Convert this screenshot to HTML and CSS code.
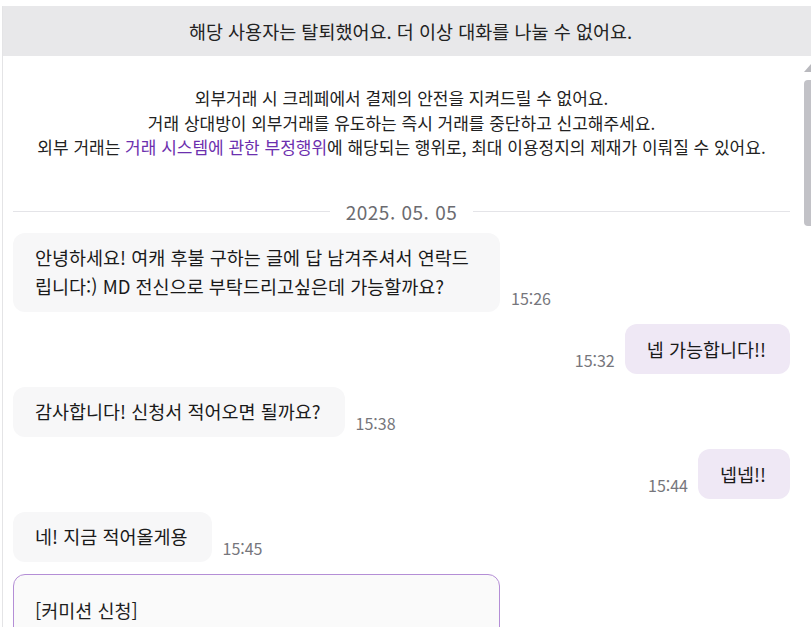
FILE: index.html
```html
<!DOCTYPE html>
<html lang="ko">
<head>
<meta charset="utf-8">
<title>채팅</title>
<link rel="stylesheet" href="styles.css">
</head>
<body>
<div class="page">
  <div class="banner">해당 사용자는 탈퇴했어요. 더 이상 대화를 나눌 수 없어요.</div>
  <div class="body">
    <div class="chat">
      <div class="notice">
        <p>외부거래 시 크레페에서 결제의 안전을 지켜드릴 수 없어요.</p>
        <p>거래 상대방이 외부거래를 유도하는 즉시 거래를 중단하고 신고해주세요.</p>
        <p>외부 거래는 <span class="link">거래 시스템에 관한 부정행위</span>에 해당되는 행위로, 최대 이용정지의 제재가 이뤄질 수 있어요.</p>
      </div>
      <div class="date"><span>2025. 05. 05</span></div>
      <div class="msg left">
        <div class="bubble wide">안녕하세요! 여캐 후불 구하는 글에 답 남겨주셔서 연락드립니다:) MD 전신으로 부탁드리고싶은데 가능할까요?</div>
        <span class="time">15:26</span>
      </div>
      <div class="msg right">
        <span class="time">15:32</span>
        <div class="bubble">넵 가능합니다!!</div>
      </div>
      <div class="msg left">
        <div class="bubble">감사합니다! 신청서 적어오면 될까요?</div>
        <span class="time">15:38</span>
      </div>
      <div class="msg right">
        <span class="time">15:44</span>
        <div class="bubble">넵넵!!</div>
      </div>
      <div class="msg left">
        <div class="bubble">네! 지금 적어올게용</div>
        <span class="time">15:45</span>
      </div>
      <div class="card">
        <p>[커미션 신청]</p>
      </div>
    </div>
    <div class="scrollbar">
      <div class="arrow"></div>
      <div class="thumb"></div>
    </div>
  </div>
</div>
</body>
</html>
```
FILE: styles.css
```css
html, body {
  margin: 0;
  padding: 0;
  background: #ffffff;
  overflow: hidden;
}
body {
  font-family: "Noto Sans CJK KR", "Noto Sans", sans-serif;
  color: #1f1f1f;
  height: 627px;
}
.page {
  margin: 6px 0 0 2px;
  border-left: 1px solid #e4e4e6;
  height: 621px;
  display: flex;
  flex-direction: column;
}
.banner {
  background: #e8e8ea;
  height: 50px;
  display: flex;
  align-items: center;
  justify-content: center;
  font-size: 18.5px;
  color: #222;
  padding-left: 7px;
}
.body {
  flex: 1;
  display: flex;
  overflow: hidden;
}
.chat {
  flex: 1;
  padding: 30px 13px 0 10px;
  display: flex;
  flex-direction: column;
  overflow: hidden;
}
.notice {
  text-align: center;
  font-size: 17px;
  line-height: 24.5px;
  color: #222;
}
.notice p {
  margin: 0;
  white-space: nowrap;
}
.link {
  color: #6c2fae;
}
.date {
  margin-top: 40px;
  height: 24px;
  display: flex;
  align-items: center;
  gap: 16px;
  color: #6b6b70;
  font-size: 19px;
  letter-spacing: 0.5px;
}
.date::before, .date::after {
  content: "";
  flex: 1;
  height: 1px;
  background: #e4e4e8;
}
.msg {
  display: flex;
  align-items: flex-end;
  gap: 11px;
  margin-top: 12.5px;
}
.date + .msg {
  margin-top: 9px;
}
.msg.right {
  justify-content: flex-end;
  gap: 10px;
}
.bubble {
  background: #f7f7f8;
  border-radius: 12px;
  padding: 10.5px 24px 10.5px 22px;
  font-size: 18.5px;
  line-height: 29px;
  color: #1a1a1a;
  word-break: break-all;
}
.bubble.wide {
  max-width: 441px;
}
.right .bubble {
  background: #efe8f5;
}
.time {
  font-size: 16px;
  color: #76767c;
  line-height: 20px;
  margin-bottom: 4px;
}
.card {
  margin-top: 12.5px;
  width: 487px;
  border: 1px solid #b48ed6;
  border-radius: 12px;
  background: #fafafa;
  padding: 21px 21px 40px;
  box-sizing: border-box;
  height: 80px;
}
.card p {
  margin: 0;
  font-size: 18.5px;
  line-height: 29px;
}
.scrollbar {
  width: 8px;
  display: flex;
  flex-direction: column;
  align-items: flex-end;
  padding-top: 8px;
}
.arrow {
  width: 0;
  height: 0;
  border-left: 7px solid transparent;
  border-bottom: 8px solid #b9b9be;
}
.thumb {
  margin-top: 8px;
  width: 7px;
  height: 146px;
  background: #c2c2c7;
  border-radius: 4px 0 0 4px;
}
```
